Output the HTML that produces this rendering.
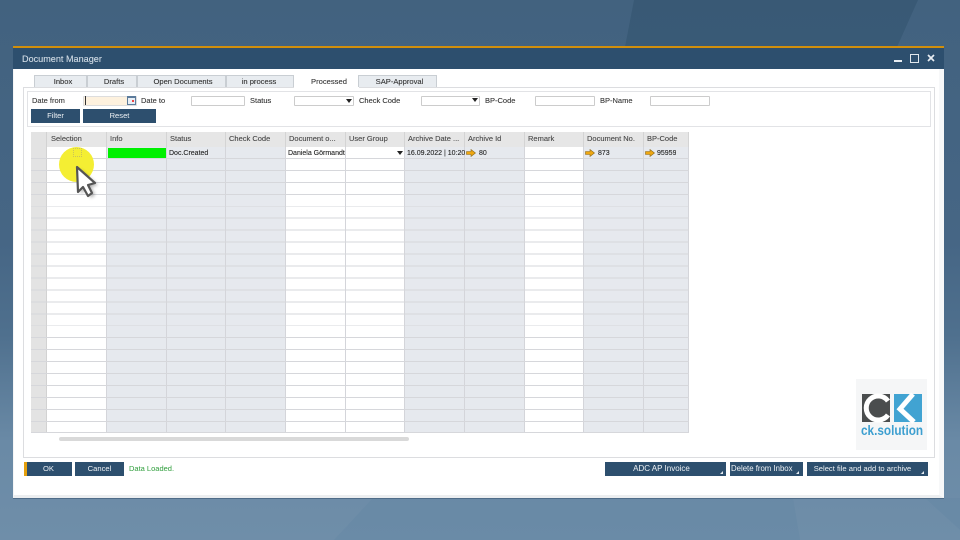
<!DOCTYPE html>
<html><head><meta charset="utf-8"><style>
html,body{margin:0;padding:0;width:960px;height:540px;overflow:hidden}
body{position:relative;font-family:"Liberation Sans",sans-serif;background:linear-gradient(180deg,#42627f 0%,#466685 45%,#4f708e 62%,#6a8aa6 82%,#6f8ea9 100%)}
.a{position:absolute;box-sizing:border-box}
.t{position:absolute;font-size:7.5px;line-height:12px;color:#333;white-space:nowrap;-webkit-text-stroke:.12px #444}
.tab{position:absolute;top:75px;height:12px;background:#e8ecf0;border:1px solid #c9ced3;border-bottom:0;box-sizing:border-box;font-size:7.6px;line-height:12px;text-align:center;color:#333;-webkit-text-stroke:.12px #444}
.in{position:absolute;height:10px;top:96px;background:#fff;border:1px solid #ccc;border-radius:1px;box-sizing:border-box}
.btn{position:absolute;background:#2d4f6e;color:#eef2f5;font-size:7.6px;text-align:center;box-sizing:border-box;height:14px;line-height:13px}
.col{position:absolute;top:147px;height:286px;width:60px;box-sizing:border-box;border-right:1px solid #d4d5da}
.g{background-color:#e6e9ee}.w{background-color:#fff}
.hd{position:absolute;top:132px;height:15px;background:#e6e6e6;border-right:1px solid #d4d4d4;box-sizing:border-box;font-size:7.5px;line-height:13px;color:#444;padding-left:3px;white-space:nowrap;overflow:hidden;-webkit-text-stroke:.12px #555}
.c{position:absolute;top:148px;height:12px;font-size:7px;line-height:12px;color:#222;white-space:nowrap;overflow:hidden;-webkit-text-stroke:.12px #333}
.arr{position:absolute;top:149px}
.cor{position:absolute;width:0;height:0;border-left:3px solid transparent;border-bottom:3px solid #e6ecf1;top:471px}
.drop{position:absolute;width:0;height:0;border-left:3px solid transparent;border-right:3px solid transparent;border-top:4px solid #222}
</style></head><body>
<svg class="a" style="left:0;top:0" width="960" height="540">
<polygon points="634,0 918,0 897,47 625,47" fill="#2f4f6b" opacity=".45"/>
<polygon points="334,540 373,498 793,498 800,540" fill="#5f83a3" opacity=".3"/>
<polygon points="925,498 960,498 960,530" fill="#5f83a3" opacity=".3"/>
</svg>
<div class="a" style="left:13px;top:46px;width:931px;height:452px;background:#fff;border-left:1px solid #f4f5f6;border-right:5px solid #f7f8f9;border-bottom:3px solid #eceef0;box-shadow:0 1px 0 #4f6c88"></div>
<div class="a" style="left:13px;top:46px;width:931px;height:2px;background:#d18f0c"></div>
<div class="a" style="left:13px;top:48px;width:931px;height:21px;background:#2d4f6e"></div>
<div class="t" style="left:22px;top:52px;font-size:9.100px;line-height:14px;color:#d3dde6;-webkit-text-stroke:.1px #d3dde6">Document Manager</div>
<div class="a" style="left:894px;top:60px;width:8px;height:2px;background:#e8edf2"></div>
<div class="a" style="left:910px;top:54px;width:9px;height:9px;border:1px solid #e0e7ed;border-top-width:1.500px"></div>
<svg class="a" style="left:927px;top:54px" width="8" height="8"><path d="M1 1L7 7M7 1L1 7" stroke="#e8edf2" stroke-width="1.700"/></svg>

<div class="a" style="left:23px;top:87px;width:912px;height:371px;border:1px solid #dcdde0;background:#fff"></div>
<div class="tab" style="left:34px;width:53px;padding-left:5px">Inbox</div>
<div class="tab" style="left:87px;width:50px;padding-left:4px">Drafts</div>
<div class="tab" style="left:137px;width:89px;padding-left:3px">Open Documents</div>
<div class="tab" style="left:226px;width:68px;padding-right:2px">in process</div>
<div class="tab" style="left:294px;width:65px;background:#fff;border-color:#fff;height:13px;padding-left:5px">Processed</div>
<div class="tab" style="left:358px;width:79px;padding-left:4px">SAP-Approval</div>

<div class="a" style="left:27px;top:91px;width:904px;height:36px;border:1px solid #e2e3e6"></div>
<div class="t" style="left:32px;top:95px">Date from</div>
<div class="in" style="left:83px;width:54px;background:#fdf1de;border-color:#ddd"></div>
<div class="a" style="left:85px;top:96px;width:1px;height:9px;background:#333"></div>
<div class="a" style="left:127px;top:96px;width:9px;height:9px;background:#e8eef5;border:1px solid #5b7b9b;border-top-width:2px"></div>
<div class="a" style="left:132px;top:100px;width:2px;height:2px;background:#e44"></div>
<div class="t" style="left:141px;top:95px">Date to</div>
<div class="in" style="left:191px;width:54px"></div>
<div class="t" style="left:250px;top:95px">Status</div>
<div class="in" style="left:294px;width:60px"></div><div class="drop" style="left:346px;top:99px"></div>
<div class="t" style="left:359px;top:95px">Check Code</div>
<div class="in" style="left:421px;width:59px"></div><div class="drop" style="left:472px;top:98px"></div>
<div class="t" style="left:485px;top:95px">BP-Code</div>
<div class="in" style="left:535px;width:60px"></div>
<div class="t" style="left:600px;top:95px">BP-Name</div>
<div class="in" style="left:650px;width:60px"></div>
<div class="btn" style="left:31px;top:109px;width:49px">Filter</div>
<div class="btn" style="left:83px;top:109px;width:73px">Reset</div>

<div class="a" style="left:31px;top:132px;width:16px;height:301px;background:#e3e3e3;border-right:1px solid #d2d2d2"></div>
<div class="hd" style="left:47px;width:60px;padding-left:4px">Selection</div>
<div class="hd" style="left:107px;width:60px">Info</div>
<div class="hd" style="left:167px;width:59px">Status</div>
<div class="hd" style="left:226px;width:60px">Check Code</div>
<div class="hd" style="left:286px;width:60px">Document o...</div>
<div class="hd" style="left:346px;width:59px">User Group</div>
<div class="hd" style="left:405px;width:60px">Archive Date ...</div>
<div class="hd" style="left:465px;width:60px">Archive Id</div>
<div class="hd" style="left:525px;width:59px">Remark</div>
<div class="hd" style="left:584px;width:60px">Document No.</div>
<div class="hd" style="left:644px;width:45px">BP-Code</div>

<div class="col w" style="left:47px"></div>
<div class="col g" style="left:107px"></div>
<div class="col g" style="left:167px;width:59px"></div>
<div class="col g" style="left:226px"></div>
<div class="col w" style="left:286px"></div>
<div class="col w" style="left:346px;width:59px"></div>
<div class="col g" style="left:405px"></div>
<div class="col g" style="left:465px"></div>
<div class="col w" style="left:525px;width:59px"></div>
<div class="col g" style="left:584px"></div>
<div class="col g" style="left:644px;width:45px"></div>
<div class="a" style="left:31px;top:147px;width:658px;height:286px;background:repeating-linear-gradient(180deg,transparent 0,transparent 10.950px,#d6d7db 10.950px,#d6d7db 11.950px);border-bottom:1px solid #d6d7db"></div>

<div class="a" style="left:108px;top:148px;width:58px;height:10px;background:#00f000"></div>
<div class="c" style="left:169px;width:56px">Doc.Created</div>
<div class="c" style="left:288px;width:58px">Daniela Görmandt</div>
<div class="drop" style="left:397px;top:151px"></div>
<div class="c" style="left:407px;width:58px">16.09.2022 | 10:20</div>
<div class="c" style="left:479px">80</div>
<div class="c" style="left:598px">873</div>
<div class="c" style="left:657px">95959</div>
<svg class="arr" style="left:466px" width="10" height="8"><path d="M0.500 2.500H5V0.500L9.500 4L5 7.500V5.500H0.500Z" fill="#eea610" stroke="#8a6a20" stroke-width=".6"/></svg>
<svg class="arr" style="left:585px" width="10" height="8"><path d="M0.500 2.500H5V0.500L9.500 4L5 7.500V5.500H0.500Z" fill="#eea610" stroke="#8a6a20" stroke-width=".6"/></svg>
<svg class="arr" style="left:645px" width="10" height="8"><path d="M0.500 2.500H5V0.500L9.500 4L5 7.500V5.500H0.500Z" fill="#eea610" stroke="#8a6a20" stroke-width=".6"/></svg>

<div class="a" style="left:59px;top:147px;width:35px;height:35px;border-radius:50%;background:#f4ee33"></div>
<div class="a" style="left:73px;top:148px;width:9px;height:9px;border:1px dotted #c9c35a"></div>
<svg class="a" style="left:70px;top:160px" width="36" height="42">
<path d="M7 7L8 32L13 27L18 36L22 33L18 25L25 23Z" fill="#222" opacity=".35" transform="translate(3,2)" style="filter:blur(1.500px)"/>
<path d="M7 7L8 32L13 27L18 36L22 33L18 25L25 23Z" fill="#fff" stroke="#555" stroke-width="2.200" stroke-linejoin="round"/>
</svg>

<div class="a" style="left:59px;top:437px;width:350px;height:4px;border-radius:2px;background:#d9d9d9"></div>

<div class="a" style="left:856px;top:379px;width:71px;height:71px;background:#f5f6f7"></div>
<svg class="a" style="left:860px;top:392px" width="64" height="32">
<rect x="2" y="2" width="28" height="28" fill="#4a4d4e"/>
<path d="M28 9A12 12 0 1 0 28 23" fill="none" stroke="#fff" stroke-width="5"/>
<rect x="34" y="2" width="28" height="28" fill="#41a3d2"/>
<path d="M53 2L40 17L54 30" fill="none" stroke="#fff" stroke-width="5"/>
</svg>
<div class="t" style="left:861px;top:422px;font-size:14px;line-height:16px;font-weight:bold;color:#3d9fd0;-webkit-text-stroke:0;transform:scaleX(.84);transform-origin:left">ck.solution</div>

<div class="btn" style="left:24px;top:462px;width:48px;border-left:3px solid #e5a00d;padding-right:2px">OK</div>
<div class="btn" style="left:75px;top:462px;width:49px">Cancel</div>
<div class="t" style="left:129px;top:463px;color:#2f9e3c;-webkit-text-stroke:0">Data Loaded.</div>
<div class="btn" style="left:605px;top:462px;width:121px;font-size:8px;padding-right:8px">ADC AP Invoice</div><div class="cor" style="left:720px"></div>
<div class="btn" style="left:730px;top:462px;width:73px;text-align:left;padding-left:1px;font-size:7.800px">Delete from Inbox</div><div class="cor" style="left:796px"></div>
<div class="btn" style="left:807px;top:462px;width:121px;padding-right:10px">Select file and add to archive</div><div class="cor" style="left:921px"></div>
</body></html>
